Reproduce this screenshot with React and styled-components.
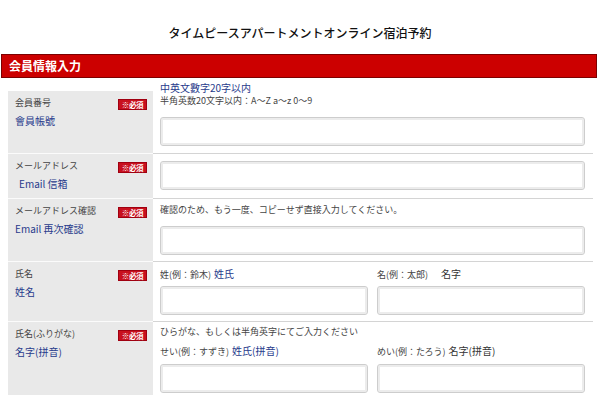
import React from "react"
import styled, { createGlobalStyle } from "styled-components"

const navy = "#283b8c"
const ink = "#444"
const jp = `"Noto Sans CJK JP", "Noto Sans", sans-serif`

const GlobalStyle = createGlobalStyle`
  html, body {
    margin: 0;
    padding: 0;
    background: #fff;
  }
  body {
    font-family: ${jp};
    color: ${ink};
  }
  * {
    box-sizing: border-box;
  }
`

const Page = styled.div`
  width: 600px;
  height: 395px;
  overflow: hidden;
`

const Title = styled.h1`
  margin: 0;
  height: 54px;
  padding-top: 25px;
  text-align: center;
  font-size: 12px;
  line-height: 16px;
  font-weight: 500;
  color: #111;
`

const SectionBar = styled.div`
  margin: 0 3px 0 1px;
  height: 24px;
  padding-left: 7px;
  background: #cc0000;
  border: 1px solid #7d0000;
  color: #fff;
  font-size: 12px;
  font-weight: 700;
  line-height: 22px;
`

const Caption = styled.div`
  padding: 4px 0 0 160px;
  margin-bottom: -3px;
  font-size: 10px;
  line-height: 12px;
  color: ${navy};
`

const Table = styled.div`
  margin-left: 8px;
  width: 585px;
`

const Row = styled.div`
  display: grid;
  grid-template-columns: 145px 1fr;
`

const LabelCell = styled.div`
  background: #e9e9e9;
  border-bottom: 1px solid #fbfbfb;
  padding: 6px 6px 0 7px;
`

const LabelHead = styled.div`
  display: flex;
  justify-content: space-between;
  align-items: flex-start;
  font-size: 9px;
  line-height: 12px;
  color: ${ink};
`

const Badge = styled.span`
  margin-top: 2px;
  width: 29px;
  height: 11px;
  background: #c8101e;
  border: 1px solid #a00010;
  color: #fff;
  font-size: 7.5px;
  font-weight: 700;
  line-height: 9px;
  text-align: center;
  letter-spacing: -0.3px;
`

const SubLabel = styled.div`
  margin-top: 4px;
  padding-left: ${p => (p.$indent ? "4px" : "0")};
  font-size: 10px;
  line-height: 14px;
  color: ${navy};
`

const FieldCell = styled.div`
  padding: ${p => p.$pad || "6px 8px 6px 7px"};
  border-bottom: 1px solid #d4d4d4;
`

const Note = styled.div`
  margin-top: ${p => p.$gap || "0"};
  font-size: 9px;
  line-height: 12px;
  color: ${ink};
  white-space: nowrap;
`

const Accent = styled.span`
  margin-left: 3px;
  font-size: 10px;
  color: ${p => (p.$plain ? "#333" : navy)};
`

const Pair = styled.div`
  display: grid;
  grid-template-columns: 1fr 1fr;
  column-gap: 9px;
`

const Input = styled.input`
  display: block;
  width: 100%;
  height: 29px;
  margin-top: ${p => p.$gap || "0"};
  border: 1px solid #cdcdcd;
  border-radius: 3px;
  box-shadow: inset 0 0 0 2px #ececec;
  background: #fff;
  outline: none;
`

const Label = ({ jp: name, zh, indent }) => (
  <LabelCell>
    <LabelHead>
      <span>{name}</span>
      <Badge>※必須</Badge>
    </LabelHead>
    <SubLabel $indent={indent}>{zh}</SubLabel>
  </LabelCell>
)

export default function App() {
  return (
    <Page>
      <GlobalStyle />
      <Title>タイムピースアパートメントオンライン宿泊予約</Title>
      <SectionBar>会員情報入力</SectionBar>
      <Caption>中英文數字20字以内</Caption>
      <Table>
        <Row>
          <Label jp="会員番号" zh="會員帳號" />
          <FieldCell $pad="4px 8px 7px 7px">
            <Note>半角英数20文字以内：A～Z a～z 0～9</Note>
            <Input $gap="10px" />
          </FieldCell>
        </Row>
        <Row>
          <Label jp="メールアドレス" zh="Email 信箱" indent />
          <FieldCell $pad="7px 8px 8px 7px">
            <Input />
          </FieldCell>
        </Row>
        <Row>
          <Label jp="メールアドレス確認" zh="Email 再次確認" />
          <FieldCell $pad="5px 8px 6px 7px">
            <Note>確認のため、もう一度、コピーせず直接入力してください。</Note>
            <Input $gap="10px" />
          </FieldCell>
        </Row>
        <Row>
          <Label jp="氏名" zh="姓名" />
          <FieldCell $pad="6px 8px 6px 7px">
            <Pair>
              <div>
                <Note>姓(例：鈴木)<Accent>姓氏</Accent></Note>
                <Input $gap="5px" />
              </div>
              <div>
                <Note>名(例：太郎)<Accent $plain>　名字</Accent></Note>
                <Input $gap="5px" />
              </div>
            </Pair>
          </FieldCell>
        </Row>
        <Row>
          <Label jp="氏名(ふりがな)" zh="名字(拼音)" />
          <FieldCell $pad="4px 8px 8px 7px">
            <Note>ひらがな、もしくは半角英字にてご入力ください</Note>
            <Pair>
              <div>
                <Note $gap="7px">せい(例：すずき)<Accent>姓氏(拼音)</Accent></Note>
                <Input $gap="6px" />
              </div>
              <div>
                <Note $gap="7px">めい(例：たろう)<Accent $plain>名字(拼音)</Accent></Note>
                <Input $gap="6px" />
              </div>
            </Pair>
          </FieldCell>
        </Row>
      </Table>
    </Page>
  )
}
